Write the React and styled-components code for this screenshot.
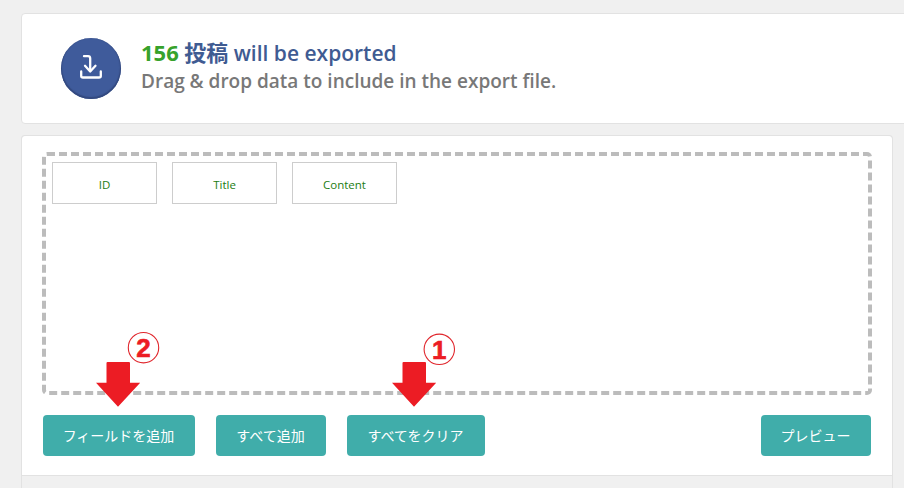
import React from "react";
import styled, { createGlobalStyle } from "styled-components";

const Global = createGlobalStyle`
  html, body { margin: 0; padding: 0; background: #f0f0f0; overflow: hidden; }
  body { width: 904px; height: 488px; font-family: "Open Sans", "Noto Sans CJK JP", sans-serif; }
`;

const Page = styled.div`
  width: 904px;
  height: 488px;
  overflow: hidden;
  padding: 13px 0 0 21px;
  box-sizing: border-box;
  display: flex;
  flex-direction: column;
  gap: 11px;
`;

const Summary = styled.section`
  width: 900px;
  height: 111px;
  flex: none;
  box-sizing: border-box;
  background: #fff;
  border: 1px solid #e2e2e2;
  border-radius: 4px;
  display: flex;
  align-items: center;
  gap: 20px;
  padding: 0 0 0 39px;
`;

const Badge = styled.div`
  width: 60px;
  height: 61px;
  border-radius: 50%;
  background: #3f5b9b;
  box-shadow: inset 0 -1px 1px 1px #33497f;
  display: flex;
  align-items: center;
  justify-content: center;
  flex: none;
`;

const BadgeIcon = styled.svg`
  width: 24px;
  height: 26px;
  margin-bottom: 4px;
`;

const Heading = styled.div`
  display: flex;
  flex-direction: column;
  font-weight: 600;
  margin-bottom: 4px;
`;

const Title = styled.div`
  font-size: 21px;
  line-height: 28px;
  margin-bottom: 1px;
  color: #3f5b92;
  font-weight: 600;
`;

const Count = styled.span`
  color: #37a22b;
  font-size: 22px;
  font-weight: 700;
`;

const Jp = styled.span`
  font-size: 22px;
  font-weight: 700;
`;

const Sub = styled.div`
  font-size: 19px;
  line-height: 27px;
  color: #787878;
`;

const Panel = styled.section`
  width: 872px;
  height: 360px;
  flex: none;
  box-sizing: border-box;
  background: #f0f0f0;
  border: 1px solid #e2e2e2;
  border-bottom: 0;
  border-radius: 4px 4px 0 0;
  display: flex;
  flex-direction: column;
`;

const PanelBody = styled.div`
  position: relative;
  height: 340px;
  flex: none;
  box-sizing: border-box;
  background: #fff;
  border-bottom: 1px solid #e2e2e2;
  padding: 16px 20px 0 20px;
  border-radius: 4px 4px 0 0;
`;

const DropZone = styled.div`
  width: 830px;
  height: 243px;
  box-sizing: border-box;
  border: 4px dashed #bcbcbc;
  border-radius: 5px;
  padding: 6px;
  display: flex;
  align-items: flex-start;
  gap: 15px;
`;

const Field = styled.div`
  width: 105px;
  height: 42px;
  box-sizing: border-box;
  border: 1px solid #cdcdcd;
  background: #fff;
  color: #1c7d12;
  font-size: 11.5px;
  padding-top: 2px;
  display: flex;
  align-items: center;
  justify-content: center;
`;

const Actions = styled.div`
  margin-top: 20px;
  margin-left: 1px;
  width: 828px;
  display: flex;
  gap: 21px;
`;

const Button = styled.button`
  width: ${p => p.$w}px;
  height: 41px;
  border: 0;
  border-radius: 4px;
  background: #40adaa;
  color: #fff;
  font-family: "Noto Sans CJK JP", sans-serif;
  font-size: 14px;
  font-weight: 400;
  padding: 0 1px 1px 0;
  ${p => p.$end ? "margin-left: auto;" : ""}
`;

const Marker = styled.div`
  position: absolute;
  left: ${p => p.$x}px;
  top: ${p => p.$y}px;
  width: 46px;
  height: 82px;
`;

const MarkerArt = styled.svg`
  overflow: visible;
  display: block;
`;

const Mark = ({ x, y, num, nx, ny }) => (
  <Marker $x={x} $y={y}>
    <MarkerArt width="46" height="82" viewBox="0 0 46 82">
      <circle cx={nx} cy={ny} r="15.2" fill="#fff" stroke="#e0262c" strokeWidth="1.1" />
      <text x={nx} y={ny + 9.5} textAnchor="middle" fontFamily="'Liberation Sans', sans-serif" fontWeight="700" fontSize="26" fill="#ec1c24" stroke="#ec1c24" strokeWidth="0.6">{num}</text>
      <path d="M10.5 38 Q10.5 37 11.5 37 H33 Q34 37 34 38 V57.7 H44.2 L22 81.7 L0 57.7 H10.5 Z" fill="#ec1c24" />
    </MarkerArt>
  </Marker>
);

export default function App() {
  return (
    <Page>
      <Global />
      <Summary>
        <Badge>
          <BadgeIcon viewBox="0 0 24 26" fill="none" stroke="#fff" strokeWidth="2.3" strokeLinecap="round" strokeLinejoin="round">
            <path d="M5 2.2 H9 C10.5 2.2 11.2 3.2 11.2 4.5 V17" />
            <path d="M6 11.8 L11.2 17.5 L16.5 11.8" />
            <path d="M2.2 17.5 V22 Q2.2 23.5 4 23.5 H20 Q21.8 23.5 21.8 22 V17.5" />
          </BadgeIcon>
        </Badge>
        <Heading>
          <Title><Count>156</Count> <Jp>投稿</Jp> will be exported</Title>
          <Sub>Drag &amp; drop data to include in the export file.</Sub>
        </Heading>
      </Summary>
      <Panel>
        <PanelBody>
          <DropZone>
            <Field>ID</Field>
            <Field>Title</Field>
            <Field>Content</Field>
          </DropZone>
          <Actions>
            <Button $w={152}>フィールドを追加</Button>
            <Button $w={110}>すべて追加</Button>
            <Button $w={138}>すべてをクリア</Button>
            <Button $w={110} $end>プレビュー</Button>
          </Actions>
          <Mark x={74} y={189} num="2" nx={47.5} ny={22.7} />
          <Mark x={370} y={189} num="1" nx={47.3} ny={24.3} />
        </PanelBody>
      </Panel>
    </Page>
  );
}
